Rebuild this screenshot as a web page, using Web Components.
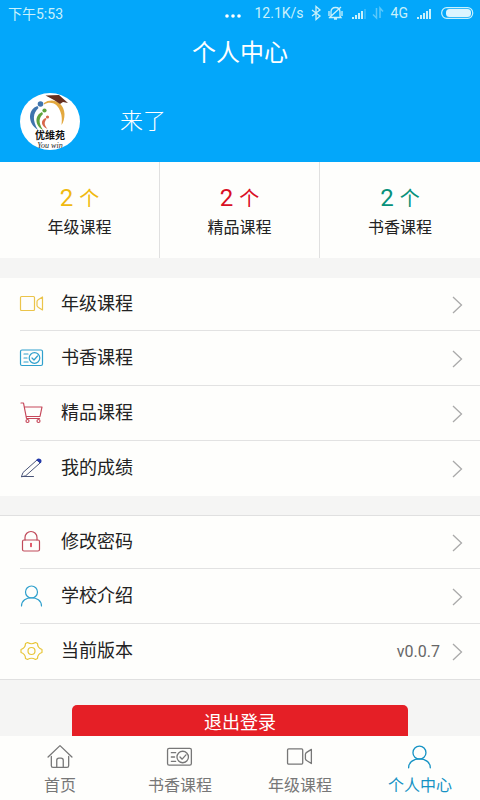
<!DOCTYPE html>
<html lang="zh-CN">
<head>
<meta charset="utf-8">
<meta name="viewport" content="width=device-width, initial-scale=1">
<title>个人中心</title>
<style>
  body { margin: 0; background: #f5f5f5; color: #222; font-family: Roboto, "Noto Sans CJK SC", sans-serif; font-weight: 400; }
</style>
</head>
<body>
<profile-app></profile-app>
<script>
const define = (name, html) => customElements.define(name, class extends HTMLElement {
  connectedCallback() {
    if (this.shadowRoot) return;
    const root = this.attachShadow({ mode: 'open' });
    const t = document.createElement('template');
    t.innerHTML = typeof html === 'function' ? html(this) : html;
    root.append(t.content.cloneNode(true));
  }
});

const icons = {
  video: '<rect x="0.500" y="4.500" width="14" height="14" rx="1"/><path d="M22.500 5v13l-4-2.500q-1.500-1-1.500-2v-4q0-1 1.500-2z"/>',
  card: '<rect x="0.500" y="4" width="22" height="15.500" rx="1.500"/><circle cx="14.500" cy="12" r="5.300"/><path d="M12 12l2 2 3.500-4M4 8h4M4 12h3M4 16h4"/>',
  cart: '<path d="M1 2h2.500l3 15.500h13M4.500 6H22l-2 9.500H6.300"/><circle cx="7.500" cy="20" r="1.500"/><circle cx="18.500" cy="20" r="1.500"/>',
  pen: '<path d="M1.500 20.500l1.500-4L17 4l3 3L6 19.500zh12" stroke-width="1"/><path d="M17 4q1.500-1.500 3-.5t.5 3z" fill="#2238a8" stroke="#2238a8"/>',
  lock: '<rect x="2.500" y="10" width="17" height="11" rx="1.500"/><path d="M5 10V7.500a6 6 0 0 1 12 0V10"/><path d="M11 13.500v3" stroke="#d7263d" stroke-width="1.500"/>',
  user: '<circle cx="11.500" cy="8" r="6"/><path d="M1.500 22c0-11 20-11 20 0"/>',
  gear: '<path d="M7.500 3.500q4 2.500 8 0l2 1q0 4.500 4.500 6v3q-4.500 1.500-4.500 6l-2 1q-4-2.500-8 0l-2-1q0-4.500-4.500-6v-3q4.500-1.500 4.500-6z"/><circle cx="11.500" cy="12" r="3.500"/>',
  home: '<path d="M1 12L12 1.500 23 12M4 11.500V20q0 1.500 1.500 1.500h13Q20 21.500 20 20v-8.500M9 21.500V15q0-2 2-2h2q2 0 2 2v6.500"/>'
};

define('line-icon', el => `
  <style>:host{display:block;width:24px;height:24px}svg{display:block;width:100%;height:100%;overflow:visible}</style>
  <svg viewBox="0 0 24 24" fill="none" stroke="currentColor" stroke-width="1.2" stroke-linejoin="round" stroke-linecap="round" aria-hidden="true">${icons[el.getAttribute('name')]}</svg>`);

const bars = last => [0, 1, 2, 3, 4].map(i =>
  `<rect x="${i * 3 + 1}" y="${9 - i * 2}" width="2" height="${2 + i * 2}" opacity="${i === 4 ? last : 1}"/>`).join('');

define('status-bar', `
  <style>
    :host{display:flex;align-items:center;justify-content:space-between;height:26px;padding:0 6px 0 8px;font-size:14px;color:#c9f1fb}
    div{display:flex;align-items:center;gap:8px}
    svg{display:block;fill:currentColor;overflow:visible}
  </style>
  <time>下午5:53</time>
  <div>
    <svg width="22" height="12"><g fill="#fff"><circle cx="2" cy="9" r="1.800"/><circle cx="8" cy="9" r="1.800"/><circle cx="14" cy="9" r="1.800"/></g></svg>
    <span>12.1K/s</span>
    <svg width="8" height="14"><path d="M0 4l8 6-4 3.500V.5L8 4l-8 6" fill="none" stroke="currentColor" stroke-width="1.300"/></svg>
    <svg width="15" height="14"><path d="M3 10V6q0-4.500 4.500-4.500T12 6v4l1 1.500H2zM6 13h3M1 12L13 1M1 5v5M14 5v5" fill="none" stroke="currentColor" stroke-width="1.300"/></svg>
    <svg width="14" height="11">${bars(.25)}</svg>
    <svg width="10" height="12" opacity=".45"><path d="M3.500 1v10L0 7.500M7 11V1l3 3.500" fill="none" stroke="currentColor" stroke-width="1.500"/></svg>
    <span>4G</span>
    <svg width="17" height="11">${bars(1)}</svg>
    <svg width="33" height="12"><rect x=".7" y=".7" width="31" height="10.600" rx="5" fill="none" stroke="currentColor" stroke-width="1.200"/><rect x="5" y="2" width="25" height="8" rx="3.500" fill="#dcf5ff"/></svg>
  </div>`);

define('school-logo', `
  <style>:host{display:block;width:60px;height:60px}svg{display:block;width:100%;height:100%}</style>
  <svg viewBox="0 0 60 60" role="img" aria-label="优维苑">
    <defs><clipPath id="disc"><ellipse cx="30" cy="29.500" rx="30" ry="28.500"/></clipPath></defs>
    <ellipse cx="30" cy="29.500" rx="30" ry="28.500" fill="#fff"/>
    <path d="M24 11C32 5 44 10 44.500 22q0 7-3 11 1-8-1-13C38 11 30 8.500 24 12.500z" fill="#e3a83e"/>
    <circle cx="20.500" cy="12" r="2.800" fill="#3f74ad"/>
    <path d="M17.500 14C8 17 7 31 18 38 12 28 13 21 18.500 16z" fill="#3f74ad"/>
    <circle cx="24.500" cy="18.500" r="2.100" fill="#5fa23c"/>
    <path d="M22 20c-7 3-8 13 1 18-5-8-4-12 0-16z" fill="#5fa23c"/>
    <circle cx="27.500" cy="25" r="1.600" fill="#d8674b"/>
    <path d="M25.500 26c-5 2-5 8 2 11-4-5-3-7-1-10z" fill="#d8674b"/>
    <path d="M25.500 3.500L39 3l9 8-5-1-3 2-6-4z" fill="#652f20"/>
    <g clip-path="url(#disc)" text-anchor="middle">
      <text x="30" y="47" font-size="10" font-weight="700" fill="#111">优维苑</text>
      <text x="30" y="56" font-size="8" font-style="italic" font-family="Liberation Serif, serif" fill="#222">You win</text>
    </g>
  </svg>`);

define('profile-header', `
  <style>
    :host{display:block;height:162px;background:#03a7fa;color:#fff}
    h1{margin:9px 0 0;font-size:24px;line-height:36px;font-weight:inherit;text-align:center}
    div{display:flex;align-items:center;gap:40px;padding:0 20px;margin-top:21px}
    span{font-size:23px;line-height:32px;font-weight:300}
  </style>
  <status-bar></status-bar>
  <h1>个人中心</h1>
  <div><school-logo></school-logo><span><slot></slot></span></div>`);

define('stat-card', el => `
  <style>
    :host{display:flex;flex-direction:column;align-items:center;padding-top:20px;box-sizing:border-box;height:96px}
    :host(:not(:last-child)){border-right:1px solid #e0e0e0}
    p{display:flex;align-items:baseline;gap:6px;margin:0;font-size:24px;line-height:32px;color:${el.getAttribute('color')}}
    small{font-size:20px}
    span{font-size:16px;line-height:24px;margin-top:1px}
  </style>
  <p>${el.getAttribute('count')}<small>个</small></p><span><slot></slot></span>`);

define('menu-item', el => `
  <style>
    :host{display:block}
    a{display:flex;align-items:center;height:55px;padding:0 17px 0 20px;box-sizing:border-box;color:inherit;text-decoration:none}
    :host(:first-child) a{height:53px}
    :host(:not(:last-child)) a{background:linear-gradient(#e2e2e2,#e2e2e2) 20px 100% / 100% 1px no-repeat}
    line-icon{color:${el.getAttribute('color')};margin-right:17px;margin-bottom:2px}
    .label{flex:1;font-size:18px;line-height:24px;margin-bottom:1px}
    .note{font-size:16px;color:#666;margin-right:12px}
    svg{display:block;fill:none;stroke:#aaa;stroke-width:1.300}
  </style>
  <a href="#"><line-icon name="${el.getAttribute('icon')}"></line-icon><span class="label"><slot></slot></span>
  <span class="note">${el.getAttribute('note') || ''}</span>
  <svg width="11" height="18" aria-hidden="true"><path d="M1 1l8.500 8L1 17"/></svg></a>`);

define('menu-group', `
  <style>:host{display:block;background:#fefefc}:host([ruled]){border:solid #e0e0e0;border-width:1px 0}</style><slot></slot>`);

define('logout-button', `
  <style>
    :host{display:block;margin:25px 15% 0}
    button{display:block;width:100%;height:36px;border:0;border-radius:5px;padding:0;background:#e51f26;color:#fff;font:inherit;font-size:18px;line-height:24px}
  </style>
  <button type="button"><slot></slot></button>`);

define('tab-item', el => `
  <style>
    :host{display:block;flex:1;color:#777}
    :host([active]){color:#1592c4}
    a{display:flex;flex-direction:column;align-items:center;gap:4px;height:64px;padding-top:8px;box-sizing:border-box;color:inherit;text-decoration:none;font-size:16px;line-height:24px}
    line-icon{width:26px;height:26px}
  </style>
  <a href="#"><line-icon name="${el.getAttribute('icon')}"></line-icon><span><slot></slot></span></a>`);

define('tab-bar', `
  <style>:host{display:block;background:#fefefc}nav{display:flex}</style>
  <nav><slot></slot></nav>`);

define('profile-app', `
  <style>
    :host{display:flex;flex-direction:column;height:100vh}
    main{flex:1;min-height:0;overflow:hidden;background:#f5f5f4}
    .stats{display:grid;grid-template-columns:repeat(3,1fr);background:#fefefc;margin-bottom:20px}
    menu-group + menu-group{margin-top:19px}
    tab-bar{flex:none}
  </style>
  <main>
    <profile-header>来了</profile-header>
    <section class="stats">
      <stat-card count="2" color="#f0b90f">年级课程</stat-card>
      <stat-card count="2" color="#d90f24">精品课程</stat-card>
      <stat-card count="2" color="#07917a">书香课程</stat-card>
    </section>
    <menu-group>
      <menu-item icon="video" color="#ebc44a">年级课程</menu-item>
      <menu-item icon="card" color="#2fa0cd">书香课程</menu-item>
      <menu-item icon="cart" color="#c6485a">精品课程</menu-item>
      <menu-item icon="pen" color="#4a5578">我的成绩</menu-item>
    </menu-group>
    <menu-group ruled>
      <menu-item icon="lock" color="#c04a5a">修改密码</menu-item>
      <menu-item icon="user" color="#2fa0cd">学校介绍</menu-item>
      <menu-item icon="gear" color="#e8c63a" note="v0.0.7">当前版本</menu-item>
    </menu-group>
    <logout-button>退出登录</logout-button>
  </main>
  <tab-bar>
    <tab-item icon="home">首页</tab-item>
    <tab-item icon="card">书香课程</tab-item>
    <tab-item icon="video">年级课程</tab-item>
    <tab-item icon="user" active>个人中心</tab-item>
  </tab-bar>`);
</script>
</body>
</html>
